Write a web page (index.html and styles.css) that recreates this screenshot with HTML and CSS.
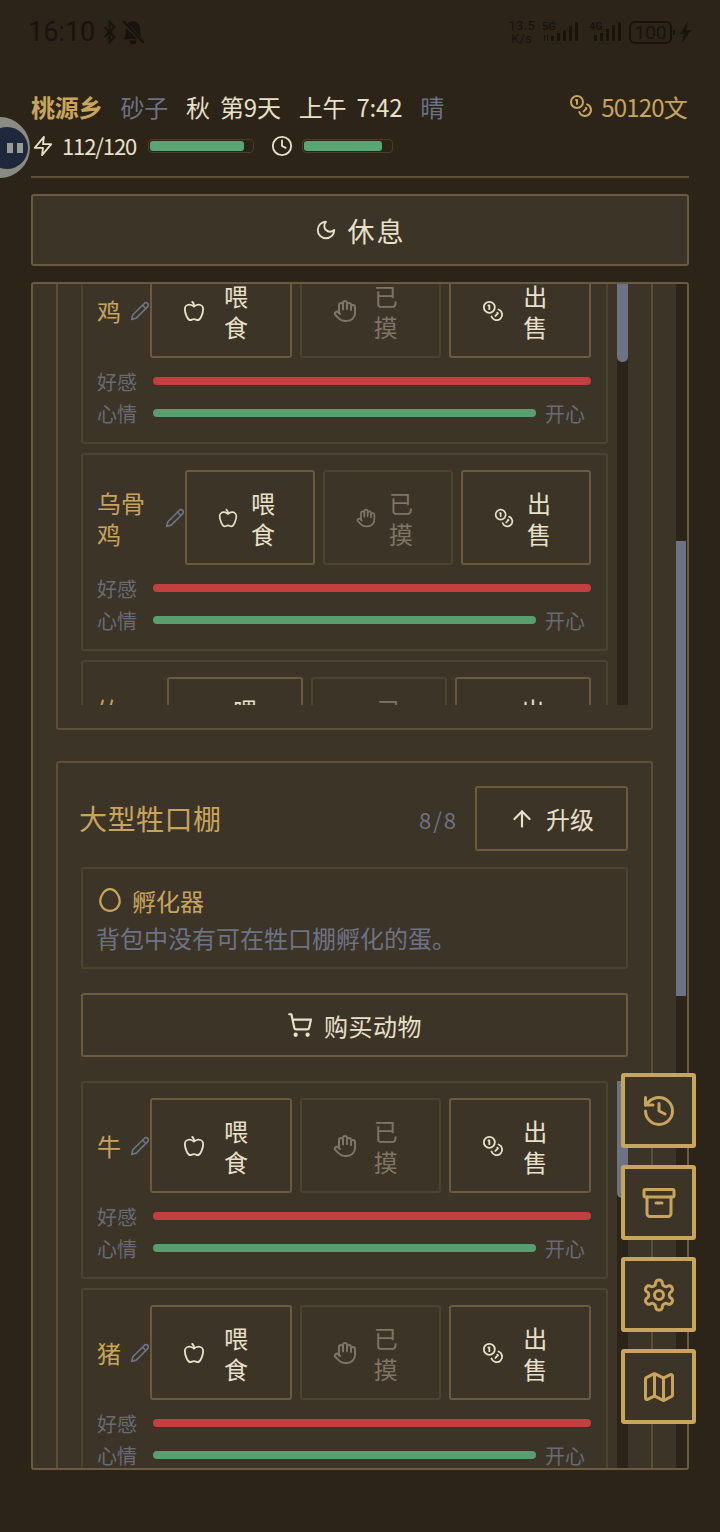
FILE: index.html
```html
<!DOCTYPE html>
<html lang="zh">
  <head>
    <meta charset="utf-8">
    <title>桃源乡</title>
    <link rel="stylesheet" href="styles.css">
  </head>
  <body>
    <svg class="defs" width="0" height="0">
      <symbol id="i-zap" viewBox="0 0 24 24"><polygon points="13 2 3 14 12 14 11 22 21 10 12 10 13 2"/></symbol>
      <symbol id="i-clock" viewBox="0 0 24 24"><circle cx="12" cy="12" r="10"/><polyline points="12 6 12 12 16 14"/></symbol>
      <symbol id="i-coins" viewBox="0 0 24 24"><circle cx="8" cy="8" r="6"/><path d="M18.09 10.37A6 6 0 1 1 10.34 18"/><path d="M7 6h1v4"/><path d="m16.71 13.88.7.71-2.82 2.82"/></symbol>
      <symbol id="i-moon" viewBox="0 0 24 24"><path d="M12 3a6 6 0 0 0 9 9 9 9 0 1 1-9-9Z"/></symbol>
      <symbol id="i-apple" viewBox="0 0 24 24"><path d="M12 20.94c1.5 0 2.75 1.06 4 1.06 3 0 6-8 6-12.22A4.91 4.91 0 0 0 17 5c-2.22 0-4 1.44-5 2-1-.56-2.78-2-5-2a4.9 4.9 0 0 0-5 4.78C2 14 5 22 8 22c1.25 0 2.5-1.06 4-1.06Z"/><path d="M10 2c1 .5 2 2 2 5"/></symbol>
      <symbol id="i-hand" viewBox="0 0 24 24"><path d="M18 11V6a2 2 0 0 0-2-2a2 2 0 0 0-2 2"/><path d="M14 10V4a2 2 0 0 0-2-2a2 2 0 0 0-2 2v2"/><path d="M10 10.5V6a2 2 0 0 0-2-2a2 2 0 0 0-2 2v8"/><path d="M18 8a2 2 0 1 1 4 0v6a8 8 0 0 1-8 8h-2c-2.8 0-4.5-.86-5.99-2.34l-3.6-3.6a2 2 0 0 1 2.83-2.82L7 15"/></symbol>
      <symbol id="i-pencil" viewBox="0 0 24 24"><path d="M17 3a2.85 2.83 0 1 1 4 4L7.5 20.5 2 22l1.5-5.5Z"/><path d="m15 5 4 4"/></symbol>
      <symbol id="i-cart" viewBox="0 0 24 24"><circle cx="8" cy="21" r="1"/><circle cx="19" cy="21" r="1"/><path d="M2.05 2.05h2l2.66 12.42a2 2 0 0 0 2 1.58h9.78a2 2 0 0 0 1.95-1.57l1.65-7.43H5.12"/></symbol>
      <symbol id="i-egg" viewBox="0 0 24 24"><path d="M12 2c-5 0-9 6-9 11 0 5 4 9 9 9s9-4 9-9c0-5-4-11-9-11z"/></symbol>
      <symbol id="i-up" viewBox="0 0 24 24"><path d="m5 12 7-7 7 7"/><path d="M12 19V5"/></symbol>
      <symbol id="i-history" viewBox="0 0 24 24"><path d="M3 12a9 9 0 1 0 9-9 9.75 9.75 0 0 0-6.74 2.74L3 8"/><path d="M3 3v5h5"/><path d="M12 7v5l4 2"/></symbol>
      <symbol id="i-archive" viewBox="0 0 24 24"><rect width="20" height="5" x="2" y="3" rx="1"/><path d="M4 8v11a2 2 0 0 0 2 2h12a2 2 0 0 0 2-2V8"/><path d="M10 12h4"/></symbol>
      <symbol id="i-cog" viewBox="0 0 24 24"><path d="M12.22 2h-.44a2 2 0 0 0-2 2v.18a2 2 0 0 1-1 1.73l-.43.25a2 2 0 0 1-2 0l-.15-.08a2 2 0 0 0-2.73.73l-.22.38a2 2 0 0 0 .73 2.73l.15.1a2 2 0 0 1 1 1.72v.51a2 2 0 0 1-1 1.74l-.15.09a2 2 0 0 0-.73 2.73l.22.38a2 2 0 0 0 2.73.73l.15-.08a2 2 0 0 1 2 0l.43.25a2 2 0 0 1 1 1.73V20a2 2 0 0 0 2 2h.44a2 2 0 0 0 2-2v-.18a2 2 0 0 1 1-1.73l.43-.25a2 2 0 0 1 2 0l.15.08a2 2 0 0 0 2.73-.73l.22-.39a2 2 0 0 0-.73-2.73l-.15-.08a2 2 0 0 1-1-1.74v-.5a2 2 0 0 1 1-1.74l.15-.09a2 2 0 0 0 .73-2.73l-.22-.38a2 2 0 0 0-2.73-.73l-.15.08a2 2 0 0 1-2 0l-.43-.25a2 2 0 0 1-1-1.73V4a2 2 0 0 0-2-2z"/><circle cx="12" cy="12" r="3"/></symbol>
      <symbol id="i-map" viewBox="0 0 24 24"><path d="M14.106 5.553a2 2 0 0 0 1.788 0l3.659-1.83A1 1 0 0 1 21 4.619v12.764a1 1 0 0 1-.553.894l-4.553 2.277a2 2 0 0 1-1.788 0l-4.212-2.106a2 2 0 0 0-1.788 0l-3.659 1.83A1 1 0 0 1 3 19.381V6.618a1 1 0 0 1 .553-.894l4.553-2.277a2 2 0 0 1 1.788 0z"/><path d="M15 5.764v15"/><path d="M9 3.236v15"/></symbol>
    </svg>

    <div class="statusbar">
      <div class="status-left">
        <span class="clock">16:10</span>
        <svg class="st-icon" width="15" height="24" viewBox="0 0 14 24"><path d="M2 7l10 10-5 5V2l5 5L2 17" fill="none" stroke="#17130d" stroke-width="2.2"/></svg>
        <svg class="st-icon" width="22" height="24" viewBox="2 2 18 20"><path d="M11 3c-4 0-6 3-6 7v5l-2 3h16l-2-3v-5c0-4-2-7-6-7zM8 19h6a3 3 0 0 1-6 0z" fill="#17130d"/><path d="M2 3l18 18" stroke="#2c2419" stroke-width="3.5"/><path d="M3 3l17 18" stroke="#17130d" stroke-width="1.8"/></svg>
      </div>
      <div class="status-right">
        <div class="speed">13.5<br>K/s</div>
        <svg width="40" height="24" viewBox="0 0 40 24">
          <text x="0" y="10" class="net">5G</text>
          <path d="M2 15h1v6H2zM5 15h1v6H5z" fill="#17130d"/>
          <rect x="9" y="16" width="3" height="5" fill="#17130d"/><rect x="15" y="13" width="3" height="8" fill="#17130d"/><rect x="21" y="10" width="3" height="11" fill="#17130d"/><rect x="27" y="6" width="3" height="15" fill="#17130d"/><rect x="33" y="2" width="3" height="19" fill="#17130d"/>
        </svg>
        <svg width="32" height="24" viewBox="0 0 32 24">
          <text x="0" y="10" class="net">4G</text>
          <rect x="5" y="15" width="3" height="6" fill="#17130d"/><rect x="11" y="13" width="3" height="8" fill="#17130d"/><rect x="17" y="9" width="3" height="12" fill="#17130d"/><rect x="23" y="5" width="3" height="16" fill="#17130d"/><rect x="29" y="2" width="3" height="19" fill="#17130d"/>
        </svg>
        <div class="battery">100</div>
        <span class="battery-tip"></span>
        <svg class="bolt" width="13" height="24" viewBox="0 0 13 24"><path d="M9 1L1 14h4l-2 9 9-13H7z" fill="#17130d"/></svg>
      </div>
    </div>

    <div class="float-ball"><div class="float-ball-inner"><i></i><i></i></div></div>

    <header class="info">
      <div class="info-row">
        <div class="info-left">
          <span class="village">桃源乡</span>
          <span class="muted">砂子</span>
          <span class="when">秋 第9天</span>
          <span class="when">上午 7:42</span>
          <span class="muted">晴</span>
        </div>
        <div class="money">
          <svg class="icon icon-24"><use href="#i-coins"/></svg>
          <span>50120文</span>
        </div>
      </div>
      <div class="vitals">
        <svg class="icon icon-22"><use href="#i-zap"/></svg>
        <span class="energy">112/120</span>
        <div class="meter meter-energy"><div class="meter-fill" style="width:92%"></div></div>
        <svg class="icon icon-22 clock-icon"><use href="#i-clock"/></svg>
        <div class="meter meter-time"><div class="meter-fill" style="width:90%"></div></div>
      </div>
    </header>

    <button class="btn-wide btn-rest">
      <svg class="icon icon-22"><use href="#i-moon"/></svg>
      <span>休息</span>
    </button>

    <main class="panel">
      <div class="panel-scroll">
        <section class="shed shed-scrolled">
          <div class="list">
            <div class="cards cards-scrolled">
              <div class="card">
                <div class="card-head">
                  <div class="name-box"><span class="name">鸡</span><svg class="icon pencil"><use href="#i-pencil"/></svg></div>
                  <button class="act"><svg class="icon icon-22"><use href="#i-apple"/></svg><span class="act-text">喂食</span></button>
                  <button class="act act-off"><svg class="icon icon-24"><use href="#i-hand"/></svg><span class="act-text">已摸</span></button>
                  <button class="act"><svg class="icon icon-22"><use href="#i-coins"/></svg><span class="act-text">出售</span></button>
                </div>
                <div class="stat"><span class="stat-label">好感</span><div class="stat-track"><div class="stat-fill stat-red"></div></div></div>
                <div class="stat"><span class="stat-label">心情</span><div class="stat-track"><div class="stat-fill stat-green"></div></div><span class="stat-mood">开心</span></div>
              </div>

              <div class="card card-tight">
                <div class="card-head">
                  <div class="name-box name-box-lg"><span class="name name-wrap">乌骨鸡</span><svg class="icon pencil"><use href="#i-pencil"/></svg></div>
                  <button class="act"><svg class="icon icon-20"><use href="#i-apple"/></svg><span class="act-text">喂食</span></button>
                  <button class="act act-off"><svg class="icon icon-20"><use href="#i-hand"/></svg><span class="act-text">已摸</span></button>
                  <button class="act"><svg class="icon icon-20"><use href="#i-coins"/></svg><span class="act-text">出售</span></button>
                </div>
                <div class="stat"><span class="stat-label">好感</span><div class="stat-track"><div class="stat-fill stat-red"></div></div></div>
                <div class="stat"><span class="stat-label">心情</span><div class="stat-track"><div class="stat-fill stat-green"></div></div><span class="stat-mood">开心</span></div>
              </div>

              <div class="card card-tight">
                <div class="card-head">
                  <div class="name-box name-box-md"><span class="name name-one">竹鸡</span><svg class="icon pencil"><use href="#i-pencil"/></svg></div>
                  <button class="act"><svg class="icon icon-20"><use href="#i-apple"/></svg><span class="act-text">喂食</span></button>
                  <button class="act act-off"><svg class="icon icon-20"><use href="#i-hand"/></svg><span class="act-text">已摸</span></button>
                  <button class="act"><svg class="icon icon-20"><use href="#i-coins"/></svg><span class="act-text">出售</span></button>
                </div>
              </div>
            </div>
            <div class="bar"><div class="thumb"></div></div>
          </div>
        </section>

        <section class="shed">
          <div class="shed-head">
            <h2 class="shed-title">大型牲口棚</h2>
            <div class="shed-tools">
              <span class="shed-count">8/8</span>
              <button class="btn-upgrade"><svg class="icon icon-26"><use href="#i-up"/></svg><span>升级</span></button>
            </div>
          </div>
          <div class="incubator">
            <div class="incubator-head"><svg class="icon icon-26"><use href="#i-egg"/></svg><span>孵化器</span></div>
            <div class="incubator-note">背包中没有可在牲口棚孵化的蛋。</div>
          </div>
          <button class="btn-wide btn-buy">
            <svg class="icon icon-26"><use href="#i-cart"/></svg>
            <span>购买动物</span>
          </button>
          <div class="list">
            <div class="cards">
              <div class="card">
                <div class="card-head">
                  <div class="name-box"><span class="name">牛</span><svg class="icon pencil"><use href="#i-pencil"/></svg></div>
                  <button class="act"><svg class="icon icon-22"><use href="#i-apple"/></svg><span class="act-text">喂食</span></button>
                  <button class="act act-off"><svg class="icon icon-24"><use href="#i-hand"/></svg><span class="act-text">已摸</span></button>
                  <button class="act"><svg class="icon icon-22"><use href="#i-coins"/></svg><span class="act-text">出售</span></button>
                </div>
                <div class="stat"><span class="stat-label">好感</span><div class="stat-track"><div class="stat-fill stat-red"></div></div></div>
                <div class="stat"><span class="stat-label">心情</span><div class="stat-track"><div class="stat-fill stat-green"></div></div><span class="stat-mood">开心</span></div>
              </div>

              <div class="card">
                <div class="card-head">
                  <div class="name-box"><span class="name">猪</span><svg class="icon pencil"><use href="#i-pencil"/></svg></div>
                  <button class="act"><svg class="icon icon-22"><use href="#i-apple"/></svg><span class="act-text">喂食</span></button>
                  <button class="act act-off"><svg class="icon icon-24"><use href="#i-hand"/></svg><span class="act-text">已摸</span></button>
                  <button class="act"><svg class="icon icon-22"><use href="#i-coins"/></svg><span class="act-text">出售</span></button>
                </div>
                <div class="stat"><span class="stat-label">好感</span><div class="stat-track"><div class="stat-fill stat-red"></div></div></div>
                <div class="stat"><span class="stat-label">心情</span><div class="stat-track"><div class="stat-fill stat-green"></div></div><span class="stat-mood">开心</span></div>
              </div>
            </div>
            <div class="bar"><div class="thumb"></div></div>
          </div>
        </section>
      </div>
      <div class="page-bar"><div class="page-thumb"></div></div>
    </main>

    <nav class="fabs">
      <button class="fab"><svg class="icon icon-36"><use href="#i-history"/></svg></button>
      <button class="fab"><svg class="icon icon-36"><use href="#i-archive"/></svg></button>
      <button class="fab"><svg class="icon icon-36"><use href="#i-cog"/></svg></button>
      <button class="fab"><svg class="icon icon-36"><use href="#i-map"/></svg></button>
    </nav>
  </body>
</html>
```

FILE: styles.css
```css
* {
  box-sizing: border-box;
}

html, body {
  height: 100%;
}

body {
  position: relative;
  margin: 0;
  height: 1532px;
  padding: 0 31px;
  overflow: hidden;
  background: #2c2419;
  color: #e8e0c8;
  font-family: "Noto Sans CJK SC", "Noto Sans", sans-serif;
  font-size: 24px;
}

button {
  font-family: inherit;
  font-size: 24px;
  color: inherit;
  background: none;
  cursor: pointer;
}

.defs {
  position: absolute;
}

.icon {
  display: block;
  flex: none;
  fill: none;
  stroke: currentColor;
  stroke-width: 2;
  stroke-linecap: round;
  stroke-linejoin: round;
}

.icon-20 { width: 20px; height: 20px; }
.icon-22 { width: 22px; height: 22px; }
.icon-24 { width: 24px; height: 24px; }
.icon-26 { width: 26px; height: 26px; }
.icon-36 { width: 36px; height: 36px; }

/* status bar */
.statusbar {
  display: flex;
  justify-content: space-between;
  align-items: center;
  height: 64px;
  margin: 0 -3px;
  color: #17130d;
}

.status-left, .status-right {
  display: flex;
  align-items: center;
}

.status-left {
  gap: 5px;
}

.clock {
  font-family: Roboto, sans-serif;
  font-size: 27px;
  margin-right: 2px;
}

.status-right {
  gap: 7px;
  font-family: Roboto, sans-serif;
}

.speed {
  font-size: 13px;
  line-height: 13px;
  letter-spacing: .3px;
  text-align: center;
}

.net {
  font-family: Roboto, sans-serif;
  font-size: 11px;
  font-weight: 500;
  fill: #17130d;
}

.battery {
  width: 43px;
  height: 23px;
  margin-left: 1px;
  border: 2px solid #17130d;
  border-radius: 6px;
  font-size: 19px;
  line-height: 19px;
  text-align: center;
}

.battery-tip {
  width: 2px;
  height: 5px;
  margin-left: -6px;
  background: #17130d;
}

.bolt {
  margin-left: -3px;
}

/* floating ball at the left edge */
.float-ball {
  position: absolute;
  left: -31px;
  top: 117px;
  display: flex;
  justify-content: flex-end;
  align-items: center;
  width: 61px;
  height: 61px;
  padding-right: 2px;
  border-radius: 50%;
  background: #8b8b85;
}

.float-ball-inner {
  display: flex;
  justify-content: flex-end;
  align-items: center;
  gap: 4px;
  width: 42px;
  height: 42px;
  padding-right: 5px;
  border-radius: 50%;
  background: #1e283a;
}

.float-ball-inner i {
  width: 6px;
  height: 10px;
  background: #9a9a95;
}

/* header */
.info {
  height: 114px;
  padding-top: 25px;
  border-bottom: 2px solid #5f4f35;
}

.info-row {
  display: flex;
  justify-content: space-between;
  align-items: center;
  height: 34px;
}

.info-left {
  display: flex;
  gap: 18px;
  white-space: nowrap;
  letter-spacing: -.2px;
}

.village {
  color: #c8a45c;
  font-weight: 700;
}

.muted {
  color: #6b7385;
}

.when {
  word-spacing: 5px;
}

.money {
  display: flex;
  align-items: center;
  gap: 8px;
  margin-right: 2px;
  color: #c8a45c;
  letter-spacing: -.8px;
}

.vitals {
  display: flex;
  align-items: center;
  height: 30px;
  margin-top: 8px;
  padding-left: 1px;
}

.energy {
  margin: -3px 0 0 8px;
  font-size: 22px;
  letter-spacing: -1.1px;
}

.meter {
  height: 14px;
  padding: 1px;
  border: 1px solid #4a3f2d;
  border-radius: 4px;
  background: #2c2419;
}

.meter-energy {
  width: 106px;
  margin-left: 12px;
}

.meter-time {
  width: 91px;
  margin-left: 9px;
}

.clock-icon {
  margin-left: 17px;
}

.meter-fill {
  height: 100%;
  border-radius: 3px;
  background: #58a676;
}

/* wide buttons */
.btn-wide {
  display: flex;
  justify-content: center;
  align-items: center;
  width: 100%;
  border: 2px solid #6b5a3e;
  border-radius: 3px;
  background: #3d3428;
}

.btn-rest {
  height: 72px;
  margin-top: 16px;
  gap: 11px;
  font-size: 27px;
  letter-spacing: 2px;
}

.btn-buy {
  height: 64px;
  margin-top: 24px;
  gap: 11px;
  letter-spacing: .5px;
}

/* scrolling panel */
.panel {
  display: flex;
  height: 1188px;
  margin-top: 16px;
  border: 2px solid #6b5a3e;
  border-radius: 3px;
  background: #3d3428;
  overflow: hidden;
}

.panel-scroll {
  display: flex;
  flex-direction: column;
  gap: 31px;
  width: 643px;
  height: 100%;
  padding: 0 23px;
  overflow: hidden;
}

.page-bar {
  flex: 1;
  background: #2c2419;
}

.page-thumb {
  height: 455px;
  margin-top: 257px;
  margin-right: 1px;
  background: #6b7385;
}

.shed {
  flex: none;
  padding: 23px;
  border: 2px solid #5f4f35;
  border-radius: 3px;
}

.shed-scrolled {
  margin-top: -61px;
}

.shed-head {
  display: flex;
  justify-content: space-between;
  align-items: center;
  height: 65px;
}

.shed-title {
  margin: -2px 0 0 -2px;
  color: #c8a45c;
  font-size: 28px;
  font-weight: 400;
  letter-spacing: .5px;
}

.shed-tools {
  display: flex;
  align-items: center;
  gap: 17px;
}

.shed-count {
  color: #6b7385;
  font-size: 22px;
  letter-spacing: 2px;
}

.btn-upgrade {
  display: flex;
  justify-content: center;
  align-items: center;
  gap: 11px;
  width: 153px;
  height: 65px;
  padding: 0;
  border: 2px solid #6b5a3e;
  border-radius: 3px;
}

.incubator {
  height: 102px;
  margin-top: 16px;
  padding: 13px 13px;
  border: 2px solid #4e4330;
  border-radius: 3px;
}

.incubator-head {
  display: flex;
  align-items: center;
  gap: 9px;
  height: 36px;
  margin-left: 1px;
  color: #c8a45c;
}

.incubator-note {
  color: #6b7385;
  line-height: 40px;
  white-space: nowrap;
}

.list {
  display: flex;
  gap: 9px;
  height: 457px;
  margin-top: 24px;
  overflow: hidden;
}

.shed-scrolled .list {
  margin-top: 0;
}

.cards {
  display: flex;
  flex-direction: column;
  gap: 9px;
  flex: 1;
  min-width: 0;
}

.cards-scrolled {
  margin-top: -2px;
}

.bar {
  flex: none;
  width: 11px;
  background: #2c2419;
}

.thumb {
  height: 117px;
  border-radius: 0 0 5px 5px;
  background: #6b7385;
}

.shed-scrolled .thumb {
  height: 114px;
}

/* animal card */
.card {
  flex: none;
  height: 198px;
  padding: 15px;
  border: 2px solid #4e4330;
  border-radius: 3px;
}

.card-head {
  display: flex;
  gap: 8px;
  height: 95px;
}

.name-box {
  display: flex;
  align-items: center;
  flex: none;
  width: 44px;
  color: #c8a45c;
}

.name-box-lg { width: 79px; }
.name-box-md { width: 61px; }

.name {
  margin-left: -1px;
  line-height: 31px;
  white-space: nowrap;
}

.name-wrap {
  width: 48px;
  white-space: normal;
}

.name-one {
  width: 24px;
  white-space: normal;
}

.pencil {
  width: 20px;
  height: 20px;
  margin-left: auto;
  margin-right: -8px;
  color: #6b7385;
}

.act {
  display: flex;
  align-items: center;
  flex: 1;
  gap: 20px;
  min-width: 0;
  padding: 0 0 0 31px;
  border: 2px solid #6b5a3e;
  border-radius: 3px;
}

.card-tight .act {
  gap: 14px;
}

.act-off {
  border-color: #4e4330;
  color: #7f7566;
}

.act-off .icon-24 {
  margin-right: -2px;
}

.act-text {
  width: 24px;
  margin-left: -1px;
  line-height: 31px;
  text-align: left;
}

.stat {
  display: flex;
  align-items: center;
  height: 28px;
  margin-top: 4px;
  color: #666b75;
  font-size: 20px;
}

.card-head + .stat {
  margin-top: 9px;
}

.stat-label {
  flex: none;
  width: 55px;
  margin-left: -1px;
  padding-right: 1px;
}

.stat-track {
  flex: 1;
  height: 8px;
  margin-left: 1px;
}

.stat-fill {
  height: 100%;
  border-radius: 4px;
}

.stat-red { background: #c44040; }
.stat-green { background: #5a9e6f; }

.stat-mood {
  flex: none;
  width: 46px;
  margin-left: 9px;
}

/* floating menu */
.fabs {
  position: absolute;
  right: 24px;
  top: 1073px;
  display: flex;
  flex-direction: column;
  gap: 17px;
}

.fab {
  display: flex;
  justify-content: center;
  align-items: center;
  width: 75px;
  height: 75px;
  padding: 0;
  border: 4px solid #c8a45c;
  border-radius: 3px;
  background: #3d3428;
  color: #c8a45c;
}
```
